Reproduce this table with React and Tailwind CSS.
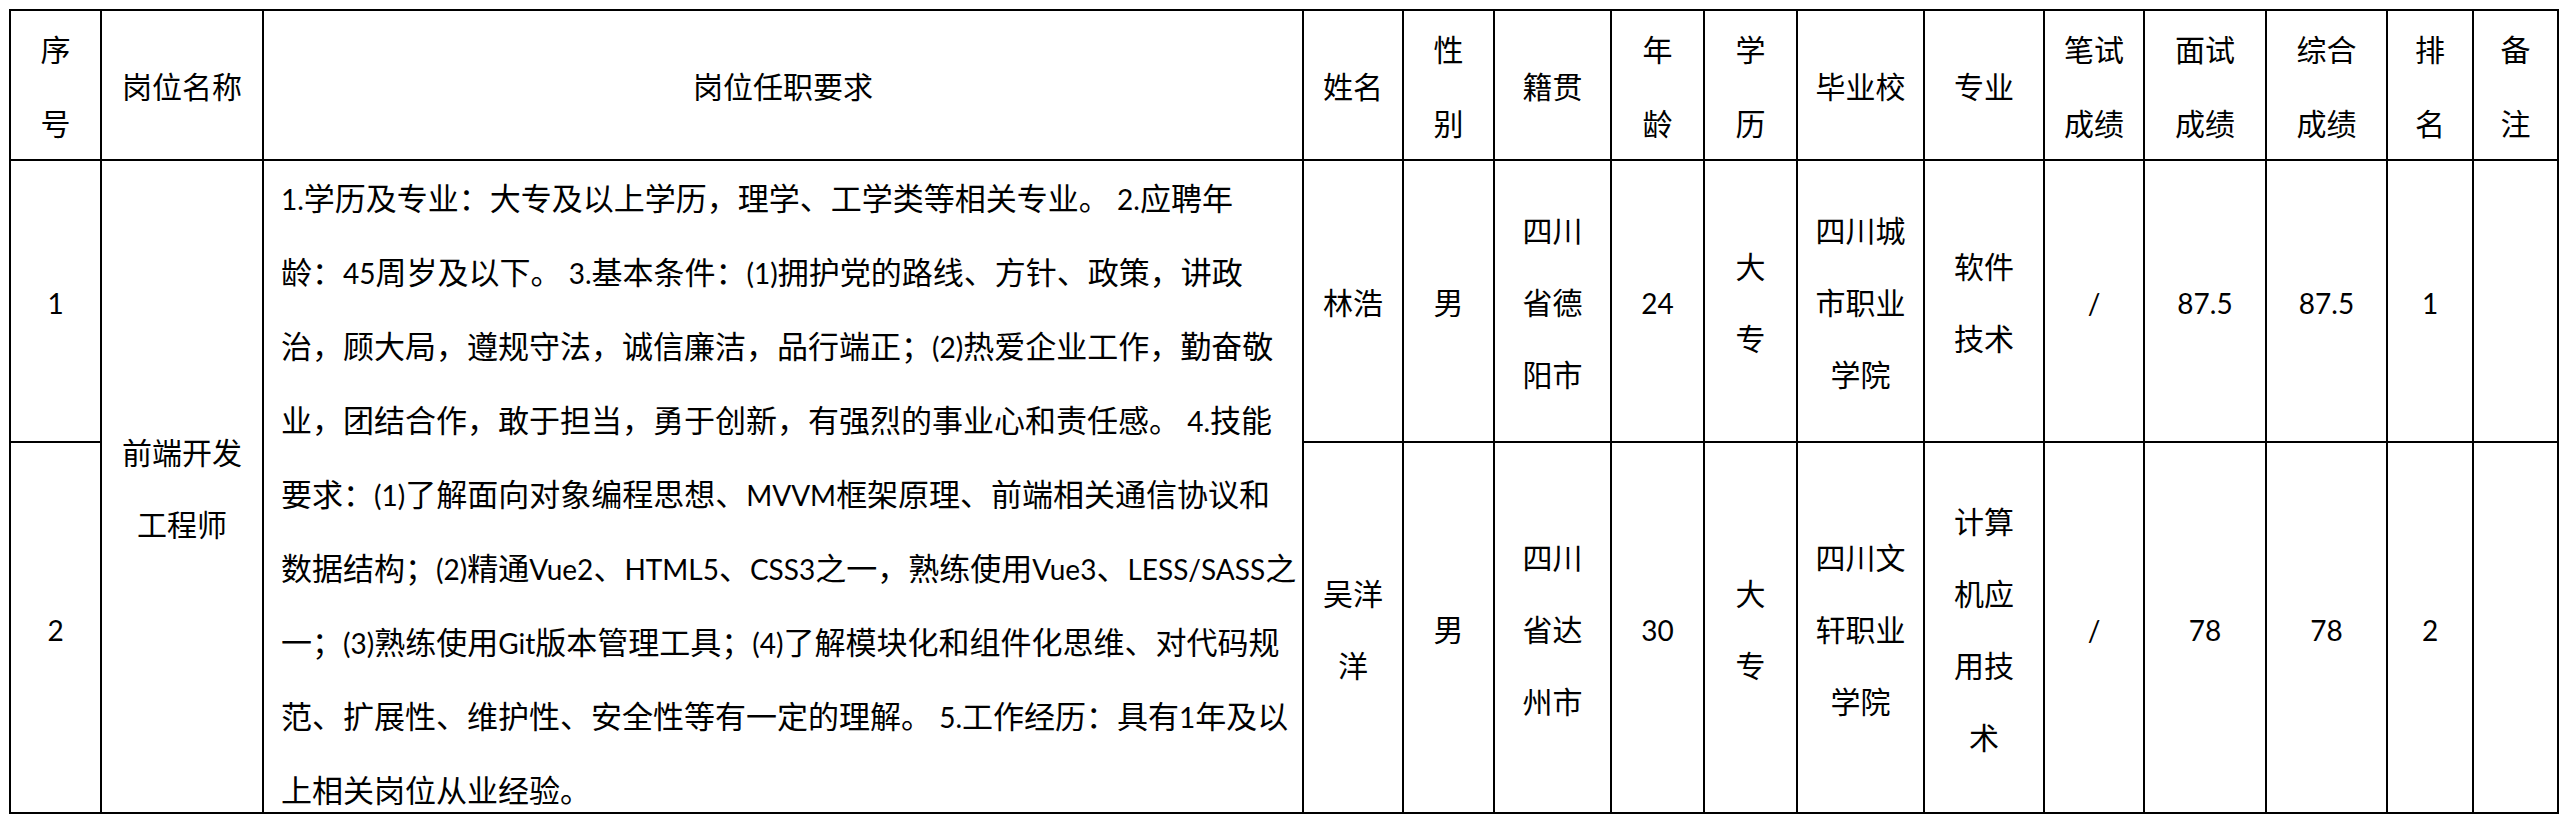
const LATIN_RUN = /([A-Za-z0-9().\/ ]+)/;
const LATIN_ONLY = /^[A-Za-z0-9().\/ ]+$/;

// CJK in Noto Sans CJK, latin/digit runs in Lato (sized down to look like Calibri)
function Mixed({ text }) {
  return text
    .split(LATIN_RUN)
    .filter(Boolean)
    .map((part, i) =>
      LATIN_ONLY.test(part) ? (
        <span key={i} className="font-['Lato','Noto_Sans_CJK_SC',sans-serif] text-[28px]">
          {part}
        </span>
      ) : (
        <span key={i}>{part}</span>
      )
    );
}

function Cell({ lines = [], className = "", line = "h-[72px] leading-[72px]" }) {
  return (
    <div
      className={`flex flex-col items-center justify-center border-r-2 border-b-2 border-black text-center ${className}`}
    >
      {lines.map((l, i) => (
        <div key={i} className={`whitespace-pre ${line}`}>
          <Mixed text={l} />
        </div>
      ))}
    </div>
  );
}

const headers = [
  ["序", "号"],
  ["岗位名称"],
  ["岗位任职要求"],
  ["姓名"],
  ["性", "别"],
  ["籍贯"],
  ["年", "龄"],
  ["学", "历"],
  ["毕业校"],
  ["专业"],
  ["笔试", "成绩"],
  ["面试", "成绩"],
  ["综合", "成绩"],
  ["排", "名"],
  ["备", "注"],
];

const requirement = [
  "1.学历及专业：大专及以上学历，理学、工学类等相关专业。 2.应聘年",
  "龄：45周岁及以下。 3.基本条件：(1)拥护党的路线、方针、政策，讲政",
  "治，顾大局，遵规守法，诚信廉洁，品行端正；(2)热爱企业工作，勤奋敬",
  "业，团结合作，敢于担当，勇于创新，有强烈的事业心和责任感。 4.技能",
  "要求：(1)了解面向对象编程思想、MVVM框架原理、前端相关通信协议和",
  "数据结构；(2)精通Vue2、HTML5、CSS3之一，熟练使用Vue3、LESS/SASS之",
  "一；(3)熟练使用Git版本管理工具；(4)了解模块化和组件化思维、对代码规",
  "范、扩展性、维护性、安全性等有一定的理解。 5.工作经历：具有1年及以",
  "上相关岗位从业经验。",
];

const people = [
  {
    no: "1",
    name: ["林浩"],
    sex: "男",
    origin: ["四川", "省德", "阳市"],
    age: "24",
    edu: ["大", "专"],
    school: ["四川城", "市职业", "学院"],
    major: ["软件", "技术"],
    written: "/",
    interview: "87.5",
    total: "87.5",
    rank: "1",
  },
  {
    no: "2",
    name: ["吴洋", "洋"],
    sex: "男",
    origin: ["四川", "省达", "州市"],
    age: "30",
    edu: ["大", "专"],
    school: ["四川文", "轩职业", "学院"],
    major: ["计算", "机应", "用技", "术"],
    written: "/",
    interview: "78",
    total: "78",
    rank: "2",
  },
];

function PersonCells({ p }) {
  return (
    <>
      <Cell lines={p.name} />
      <Cell lines={[p.sex]} />
      <Cell lines={p.origin} />
      <Cell lines={[p.age]} />
      <Cell lines={p.edu} />
      <Cell lines={p.school} />
      <Cell lines={p.major} />
      <Cell lines={[p.written]} />
      <Cell lines={[p.interview]} />
      <Cell lines={[p.total]} />
      <Cell lines={[p.rank]} />
      <Cell lines={[]} />
    </>
  );
}

export default function App() {
  const [first, second] = people;
  return (
    <div className="w-[2566px] h-[836px] bg-white pl-[9px] pt-[9px] text-black text-[30px] font-['Noto_Sans_CJK_SC',sans-serif]">
      <div className="grid w-max grid-cols-[91px_162px_1040px_100px_91px_117px_93px_93px_127px_120px_100px_122px_121px_86px_85px] grid-rows-[150px_282px_371px] border-l-2 border-t-2 border-black">
        {headers.map((h, i) => (
          <Cell key={i} lines={h} line="h-[74px] leading-[74px]" />
        ))}

        <Cell lines={[first.no]} />
        <Cell lines={["前端开发", "工程师"]} className="row-span-2" />
        <div className="row-span-2 flex flex-col border-r-2 border-b-2 border-black pl-[17px] text-[31px]">
          {requirement.map((l, i) => (
            <div key={i} className="h-[74px] shrink-0 whitespace-pre leading-[72px]">
              <Mixed text={l} />
            </div>
          ))}
        </div>
        <PersonCells p={first} />

        <Cell lines={[second.no]} />
        <PersonCells p={second} />
      </div>
    </div>
  );
}
